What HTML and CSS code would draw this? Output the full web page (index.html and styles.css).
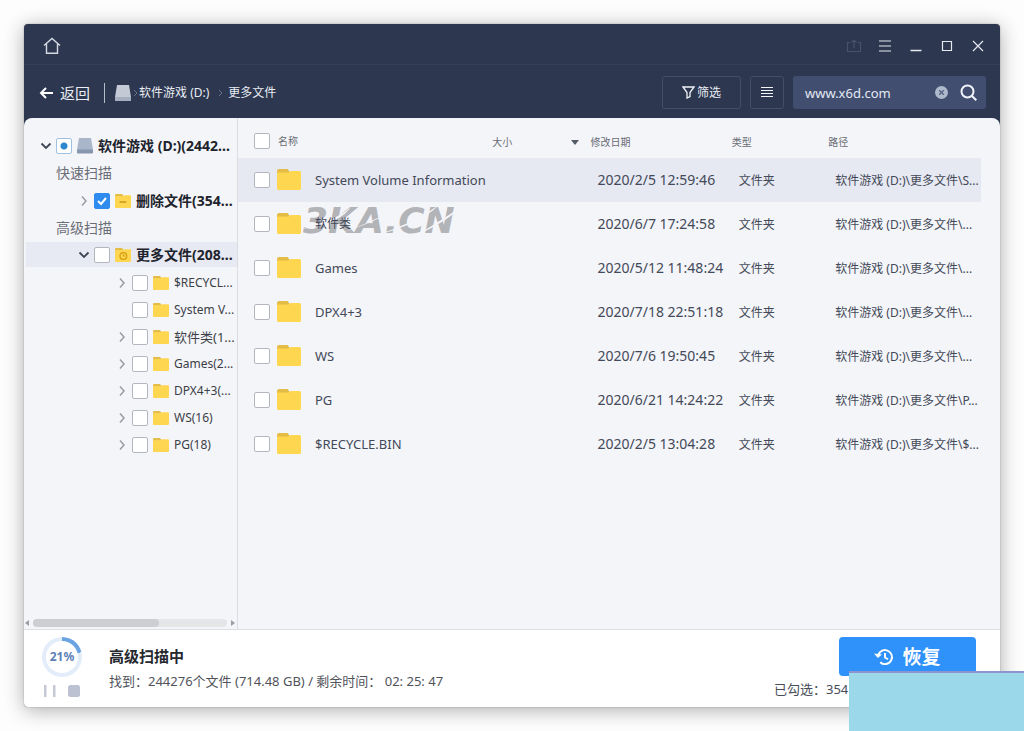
FILE: index.html
```html
<!DOCTYPE html>
<html lang="zh-CN">
<head>
<meta charset="utf-8">
<title>更多文件</title>
<link rel="stylesheet" href="styles.css">
</head>
<body>
<svg class="defs" aria-hidden="true">
  <symbol id="folder" viewBox="0 0 24 21"><path fill="#e3bd45" d="M0 2q0-2 2-2h8q1 0 1.500 1l1.500 3h-13z"/><path fill="#ffd650" d="M0 4.500q0-1 1-1h10.500l2-1.500h9q1.500 0 1.500 1.500v16q0 1.500-1.500 1.500h-21q-1.500 0-1.500-1.500z"/></symbol>
  <symbol id="right" viewBox="0 0 8 12"><path d="M2 1.500l4 4.500-4 4.500" fill="none" stroke="#9a9ca3" stroke-width="1.500"/></symbol>
  <symbol id="down" viewBox="0 0 12 8"><path d="M1.500 1.500l4.500 4.500 4.500-4.500" fill="none" stroke="#3d4454" stroke-width="1.800"/></symbol>
  <symbol id="drive" viewBox="0 0 16 16"><path fill="#a9b6ca" d="M2 0h12l2 12h-16z"/><path fill="#8696ae" d="M0 11.500h16v3q0 1-1 1h-14q-1 0-1-1z"/></symbol>
</svg>
<div class="window">
  <header class="titlebar">
    <button class="plain" aria-label="主页"><svg width="18" height="18" viewBox="0 0 18 18" fill="none" stroke="#d3dae6" stroke-width="1.400"><path d="M1 8.500L9 1.500l8 7M3.500 7v9.300h11V7"/></svg></button>
    <div class="controls">
      <button class="plain" aria-label="导出"><svg width="16" height="16" viewBox="0 0 16 16" fill="none" stroke="#475169" stroke-width="1.200"><path d="M4 4.500H1.500v9h13v-9H12M8 10V2M5.500 4.500L8 2l2.500 2.500"/></svg></button>
      <button class="plain" aria-label="菜单"><svg width="16" height="16" viewBox="0 0 16 16" stroke="#e5e9f0" stroke-width="1.200"><path d="M2 3h12M2 8h12M2 13h12"/></svg></button>
      <button class="plain" aria-label="最小化"><svg width="16" height="16" viewBox="0 0 16 16" stroke="#e5e9f0" stroke-width="1.400"><path d="M2.500 12.500h11"/></svg></button>
      <button class="plain" aria-label="最大化"><svg width="16" height="16" viewBox="0 0 16 16" fill="none" stroke="#e5e9f0" stroke-width="1.200"><path d="M3.500 3.500h9v9h-9z"/></svg></button>
      <button class="plain" aria-label="关闭"><svg width="16" height="16" viewBox="0 0 16 16" stroke="#e5e9f0" stroke-width="1.200"><path d="M3 3l10 10M13 3L3 13"/></svg></button>
    </div>
  </header>
  <div class="toolbar">
    <button class="plain back"><svg width="14" height="12" viewBox="0 0 14 12" fill="none" stroke="#fff" stroke-width="2"><path d="M14 6H2M7 1L2 6l5 5"/></svg>返回</button>
    <nav class="crumbs">
      <svg width="16" height="16" viewBox="0 0 16 16"><path fill="#c3cad6" d="M2 0h12l2 12v3q0 1-1 1H1q-1 0-1-1v-3z"/><path fill="#a4aebf" d="M0 12h16v3q0 1-1 1H1q-1 0-1-1z"/></svg>
      <svg class="sep" width="3" height="6" viewBox="0 0 3 6"><path d="M0 0l3 3-3 3" fill="none" stroke="#68748c"/></svg>
      <a href="#">软件游戏 (D:)</a>
      <svg class="sep wide" width="3" height="6" viewBox="0 0 3 6"><path d="M0 0l3 3-3 3" fill="none" stroke="#68748c"/></svg>
      <a href="#">更多文件</a>
    </nav>
    <button class="outlined filter"><svg width="13" height="13" viewBox="0 0 13 13" fill="none" stroke="#f1f4f8" stroke-width="1.300"><path d="M1 1h11L8 6.500v4L5 12V6.500z"/></svg>筛选</button>
    <button class="outlined list" aria-label="列表视图"><svg width="12" height="11" viewBox="0 0 12 11" stroke="#f1f4f8" stroke-width="1.100"><path d="M0 .5h12M0 3.500h12M0 6.500h12M0 9.500h12"/></svg></button>
    <form class="search">
      <input type="text" value="www.x6d.com" aria-label="搜索">
      <button type="button" class="plain" aria-label="清除"><svg width="13" height="13" viewBox="0 0 13 13"><circle cx="6.500" cy="6.500" r="6.500" fill="#aeb9cc"/><path d="M4.200 4.200l4.600 4.600M8.800 4.200L4.200 8.800" stroke="#53617f" stroke-width="1.300"/></svg></button>
      <button type="button" class="plain" aria-label="查找"><svg width="17" height="17" viewBox="0 0 17 17" fill="none" stroke="#f1f4fa" stroke-width="2"><circle cx="7.500" cy="7.500" r="6"/><path d="M12 12l4.300 4.300"/></svg></button>
    </form>
  </div>
  <div class="content">
    <aside class="sidebar">
      <ul class="tree">
        <li><div class="node root"><svg class="chev"><use href="#down"/></svg><input type="checkbox" class="part" id="t0"><svg class="icon"><use href="#drive"/></svg><label for="t0">软件游戏 (D:)(2442...</label></div></li>
        <li class="section">快速扫描</li>
        <li><div class="node scan"><svg class="chev"><use href="#right"/></svg><input type="checkbox" id="t1" checked><svg class="icon" viewBox="0 0 24 21"><use href="#folder"/><path d="M7 12h10" stroke="#c99416" stroke-width="2"/></svg><label for="t1">删除文件(354...</label></div></li>
        <li class="section">高级扫描</li>
        <li><div class="node scan selected"><svg class="chev"><use href="#down"/></svg><input type="checkbox" id="t2"><svg class="icon" viewBox="0 0 24 21"><use href="#folder"/><circle cx="12.500" cy="12" r="5" fill="none" stroke="#d59d10" stroke-width="2"/><path d="M12.500 9v3h3" stroke="#d59d10" stroke-width="1.600" fill="none"/></svg><label for="t2">更多文件(208...</label></div>
          <ul class="children">
            <li class="node"><svg class="chev"><use href="#right"/></svg><input type="checkbox" id="c1"><svg class="icon"><use href="#folder"/></svg><label for="c1">$RECYCL...</label></li>
            <li class="node"><span class="chev"></span><input type="checkbox" id="c2"><svg class="icon"><use href="#folder"/></svg><label for="c2">System V...</label></li>
            <li class="node"><svg class="chev"><use href="#right"/></svg><input type="checkbox" id="c3"><svg class="icon"><use href="#folder"/></svg><label for="c3" class="cjk">软件类(1...</label></li>
            <li class="node"><svg class="chev"><use href="#right"/></svg><input type="checkbox" id="c4"><svg class="icon"><use href="#folder"/></svg><label for="c4">Games(2...</label></li>
            <li class="node"><svg class="chev"><use href="#right"/></svg><input type="checkbox" id="c5"><svg class="icon"><use href="#folder"/></svg><label for="c5">DPX4+3(...</label></li>
            <li class="node"><svg class="chev"><use href="#right"/></svg><input type="checkbox" id="c6"><svg class="icon"><use href="#folder"/></svg><label for="c6">WS(16)</label></li>
            <li class="node"><svg class="chev"><use href="#right"/></svg><input type="checkbox" id="c7"><svg class="icon"><use href="#folder"/></svg><label for="c7">PG(18)</label></li>
          </ul>
        </li>
      </ul>
      <div class="hscroll">
        <svg width="4" height="6" viewBox="0 0 4 6"><path d="M4 0v6L0 3z" fill="#9a9da3"/></svg>
        <div class="track"><div class="thumb"></div></div>
        <svg width="4" height="6" viewBox="0 0 4 6"><path d="M0 0v6l4-3z" fill="#9a9da3"/></svg>
      </div>
    </aside>
    <main class="files">
      <table>
        <colgroup><col class="c-name"><col class="c-size"><col class="c-date"><col class="c-type"><col class="c-path"></colgroup>
        <thead><tr>
          <th><div class="cell head"><input type="checkbox" id="all"><label for="all">名称</label></div></th>
          <th><div class="sorter">大小<svg width="8" height="5" viewBox="0 0 8 5"><path d="M0 0h8L4 5z" fill="#555b66"/></svg></div></th>
          <th>修改日期</th><th>类型</th><th>路径</th>
        </tr></thead>
        <tbody>
          <tr class="current"><td><div class="cell"><input type="checkbox" id="f1"><svg class="big"><use href="#folder"/></svg><label for="f1">System Volume Information</label></div></td><td></td><td class="date">2020/2/5 12:59:46</td><td>文件夹</td><td>软件游戏 (D:)\更多文件\S...</td></tr>
          <tr><td><div class="cell marked"><input type="checkbox" id="f2"><svg class="big"><use href="#folder"/></svg><label for="f2" class="cjk">软件类</label>
            <div class="watermark">3KA.CN<svg viewBox="0 0 160 32"><path d="M-2 24Q40 18 48 1Q38 14-2 24zM26 32Q78 16 98 0Q70 18 26 32zM70 31Q116 20 136 0Q108 20 70 31zM112 31Q145 16 158 2Q134 18 112 31z" fill="#f4f5f9"/></svg></div></div></td><td></td><td class="date">2020/6/7 17:24:58</td><td>文件夹</td><td>软件游戏 (D:)\更多文件\...</td></tr>
          <tr><td><div class="cell"><input type="checkbox" id="f3"><svg class="big"><use href="#folder"/></svg><label for="f3">Games</label></div></td><td></td><td class="date">2020/5/12 11:48:24</td><td>文件夹</td><td>软件游戏 (D:)\更多文件\...</td></tr>
          <tr><td><div class="cell"><input type="checkbox" id="f4"><svg class="big"><use href="#folder"/></svg><label for="f4">DPX4+3</label></div></td><td></td><td class="date">2020/7/18 22:51:18</td><td>文件夹</td><td>软件游戏 (D:)\更多文件\...</td></tr>
          <tr><td><div class="cell"><input type="checkbox" id="f5"><svg class="big"><use href="#folder"/></svg><label for="f5">WS</label></div></td><td></td><td class="date">2020/7/6 19:50:45</td><td>文件夹</td><td>软件游戏 (D:)\更多文件\...</td></tr>
          <tr><td><div class="cell"><input type="checkbox" id="f6"><svg class="big"><use href="#folder"/></svg><label for="f6">PG</label></div></td><td></td><td class="date">2020/6/21 14:24:22</td><td>文件夹</td><td>软件游戏 (D:)\更多文件\P...</td></tr>
          <tr><td><div class="cell"><input type="checkbox" id="f7"><svg class="big"><use href="#folder"/></svg><label for="f7">$RECYCLE.BIN</label></div></td><td></td><td class="date">2020/2/5 13:04:28</td><td>文件夹</td><td>软件游戏 (D:)\更多文件\$...</td></tr>
        </tbody>
      </table>
    </main>
  </div>
  <footer class="footer">
    <div class="progress">
      <div class="ring"><span>21%</span></div>
      <div class="actions">
        <button class="plain" aria-label="暂停"><svg width="12" height="12" viewBox="0 0 12 12" fill="#c5c9d5"><path d="M0 0h2.500v12H0zM9 0h2.500v12H9z"/></svg></button>
        <button class="plain" aria-label="停止"><svg width="12" height="12" viewBox="0 0 12 12" fill="#bcc2d2"><rect width="12" height="12" rx="2.500"/></svg></button>
      </div>
    </div>
    <div class="status">
      <strong>高级扫描中</strong>
      <span>找到：244276个文件 (714.48 GB) / 剩余时间： 02: 25: 47</span>
    </div>
    <div class="finish">
      <button class="recover"><svg width="20" height="18" viewBox="0 0 20 18" fill="none" stroke="#fff" stroke-width="1.900"><path d="M4 9a7 7 0 1 1 2.200 5.200M11 5v4.500l3 1.800"/><path d="M0 5.500l3.800 4.500 4.200-3.500z" fill="#fff" stroke="none"/></svg>恢复</button>
      <span class="picked">已勾选：354</span>
    </div>
  </footer>
</div>
<div class="panel"></div>
</body>
</html>
```

FILE: styles.css
```css
* { box-sizing: border-box; }
body {
  margin: 0;
  padding: 24px;
  background: #fdfdfd;
  font: 13px/20px "Noto Sans", "Noto Sans CJK SC", sans-serif;
  color: #474c57;
}
button, input { font: inherit; }
ul { list-style: none; margin: 0; padding: 0; }
.defs { position: absolute; width: 0; height: 0; }
.window {
  min-height: calc(100vh - 48px);
  display: flex;
  flex-direction: column;
  background: #2d374f;
  border-radius: 4px;
  box-shadow: 0 3px 20px rgba(0, 0, 0, .32), 0 0 2px rgba(0, 0, 0, .25);
  overflow: hidden;
}
.plain { border: 0; padding: 0; background: none; color: inherit; display: flex; align-items: center; }
.titlebar {
  height: 41px;
  padding: 3px 14px 0 19px;
  display: flex;
  align-items: center;
  justify-content: space-between;
  border-bottom: 1px solid #353f57;
}
.controls { display: flex; gap: 15px; }
.toolbar {
  height: 53px;
  padding: 2px 14px 0 15px;
  display: flex;
  align-items: center;
  color: #e9edf4;
}
.back { gap: 7px; font-size: 15px; padding-right: 14px; }
.crumbs {
  flex: 1;
  display: flex;
  align-items: center;
  font-size: 12px;
  border-left: 1px solid #b6bdca;
  padding-left: 10px;
}
.crumbs a { color: inherit; text-decoration: none; }
.sep { margin: 0 2px 0 3px; }
.sep.wide { margin: 0 6px 0 10px; }
.outlined {
  height: 33px;
  display: flex;
  align-items: center;
  justify-content: center;
  gap: 2px;
  background: transparent;
  border: 1px solid #444e67;
  border-radius: 3px;
  color: inherit;
  font-size: 12px;
}
.filter { width: 79px; }
.list { width: 34px; margin: 0 9px; }
.search {
  width: 193px;
  height: 33px;
  display: flex;
  align-items: center;
  gap: 12px;
  padding: 0 9px 0 12px;
  background: #414e70;
  border-radius: 3px;
}
.search input { flex: 1; min-width: 0; padding: 0; border: 0; outline: 0; background: none; color: #e4e9f3; }
.content {
  flex: 1;
  display: flex;
  background: #f4f5f9;
  border-radius: 8px 8px 0 0;
}
input[type="checkbox"] {
  appearance: none;
  flex: none;
  width: 16px;
  height: 16px;
  margin: 0;
  border: 1px solid #b3b6be;
  border-radius: 2px;
  background: #fff;
}
input[type="checkbox"]:checked {
  border-color: #2f8bee;
  background: #2f8bee url("data:image/svg+xml,%3Csvg xmlns='http://www.w3.org/2000/svg' viewBox='0 0 14 14'%3E%3Cpath d='M3 7l3 3 5-6' fill='none' stroke='white' stroke-width='2'/%3E%3C/svg%3E");
}
input[type="checkbox"].part { background: radial-gradient(circle, #2e86cf 3px, #fff 4px); border-color: #9fc2e4; }
.sidebar {
  width: 214px;
  flex: none;
  display: flex;
  flex-direction: column;
  justify-content: space-between;
  border-right: 1px solid #dcdde2;
}
.tree { padding-top: 14px; }
.node { height: 27px; display: flex; align-items: center; white-space: nowrap; }
.node .chev { width: 12px; height: 12px; flex: none; margin-right: 4px; }
.node .icon { width: 16px; height: 14px; flex: none; margin: 0 5px; }
.root, .scan { font-size: 14px; font-weight: 700; color: #20232b; }
.root { padding-left: 16px; }
.root .icon { height: 16px; }
.scan { padding-left: 54px; }
.section { height: 28px; line-height: 28px; padding-left: 32px; font-size: 14px; color: #6b6e76; }
.selected { height: 25px; margin: 0 0 1px 2px; padding-left: 52px; background: #e7e9f3; }
.children { padding-top: 1px; }
.children .node { padding-left: 92px; font-size: 12px; color: #3c3f47; }
.children .cjk { font-size: 13px; }
.hscroll { display: flex; align-items: center; gap: 4px; height: 12px; padding: 0 2px 0 1px; }
.track { flex: 1; height: 8px; border-radius: 4px; background: #e4e5e7; }
.thumb { width: 65%; height: 8px; border-radius: 4px; background: #cdced1; }
.files { flex: 1; min-width: 0; padding-right: 19px; }
table { width: 100%; table-layout: fixed; border-collapse: collapse; font-size: 12px; color: #434958; }
.c-name { width: 33%; }
.c-size { width: 13.500%; }
.c-date { width: 19%; }
.c-type { width: 13%; }
th { height: 40px; padding: 8px 0 0 7px; text-align: left; font-size: 10px; font-weight: 400; color: #696c74; }
td { height: 44px; padding: 2px 0 0 14px; white-space: nowrap; }
th:first-child { padding: 6px 0 0 16px; }
td:first-child { padding: 0 0 0 16px; }
.cell { display: flex; align-items: center; font-size: 13px; }
.cell .big { flex: none; width: 24px; height: 21px; margin: 0 14px 2px 7px; }
.head { gap: 8px; font-size: 10px; }
.sorter { display: flex; align-items: center; justify-content: space-between; padding: 0 4px 0 2px; }
.date { padding-top: 0; font-size: 14px; }
.cell .cjk { font-size: 12px; }
.current { background: #e6e8f2; }
.marked { position: relative; }
.marked label { position: relative; z-index: 1; }
.watermark {
  position: absolute;
  left: 49px;
  top: -8px;
  font: italic 700 36px/32px "DejaVu Sans", sans-serif;
  color: #b3b4b8;
}
.watermark svg { position: absolute; left: 0; top: 0; width: 160px; height: 32px; }
.footer {
  height: 78px;
  display: flex;
  padding: 7px 24px 0 18px;
  background: #fff;
  border-top: 1px solid #dedfe3;
}
.progress { width: 67px; }
.ring {
  width: 40px;
  height: 40px;
  padding: 4px;
  border-radius: 50%;
  background: conic-gradient(#6ba4e2 21%, #e3ecf9 0);
}
.ring span {
  display: block;
  height: 32px;
  border-radius: 50%;
  background: #fff;
  color: #5b80b8;
  font-size: 12px;
  font-weight: 700;
  line-height: 32px;
  text-align: center;
}
.actions { display: flex; gap: 12px; padding: 8px 0 0 2px; }
.status { flex: 1; display: flex; flex-direction: column; gap: 5px; padding-top: 9px; color: #50535a; }
.status strong { font-size: 15px; color: #25282e; }
.finish { width: 202px; display: flex; flex-direction: column; gap: 3px; }
.recover {
  width: 137px;
  height: 39px;
  align-self: flex-end;
  display: flex;
  align-items: center;
  justify-content: center;
  gap: 8px;
  border: 0;
  border-radius: 4px;
  background: #2f91fa;
  color: #fff;
  font-size: 19px;
  font-weight: 700;
}
.panel {
  position: fixed;
  right: 0;
  bottom: 0;
  width: 175px;
  height: 60px;
  border-top: 2px solid #8c93cf;
  background: #9bd8e9;
}
```
